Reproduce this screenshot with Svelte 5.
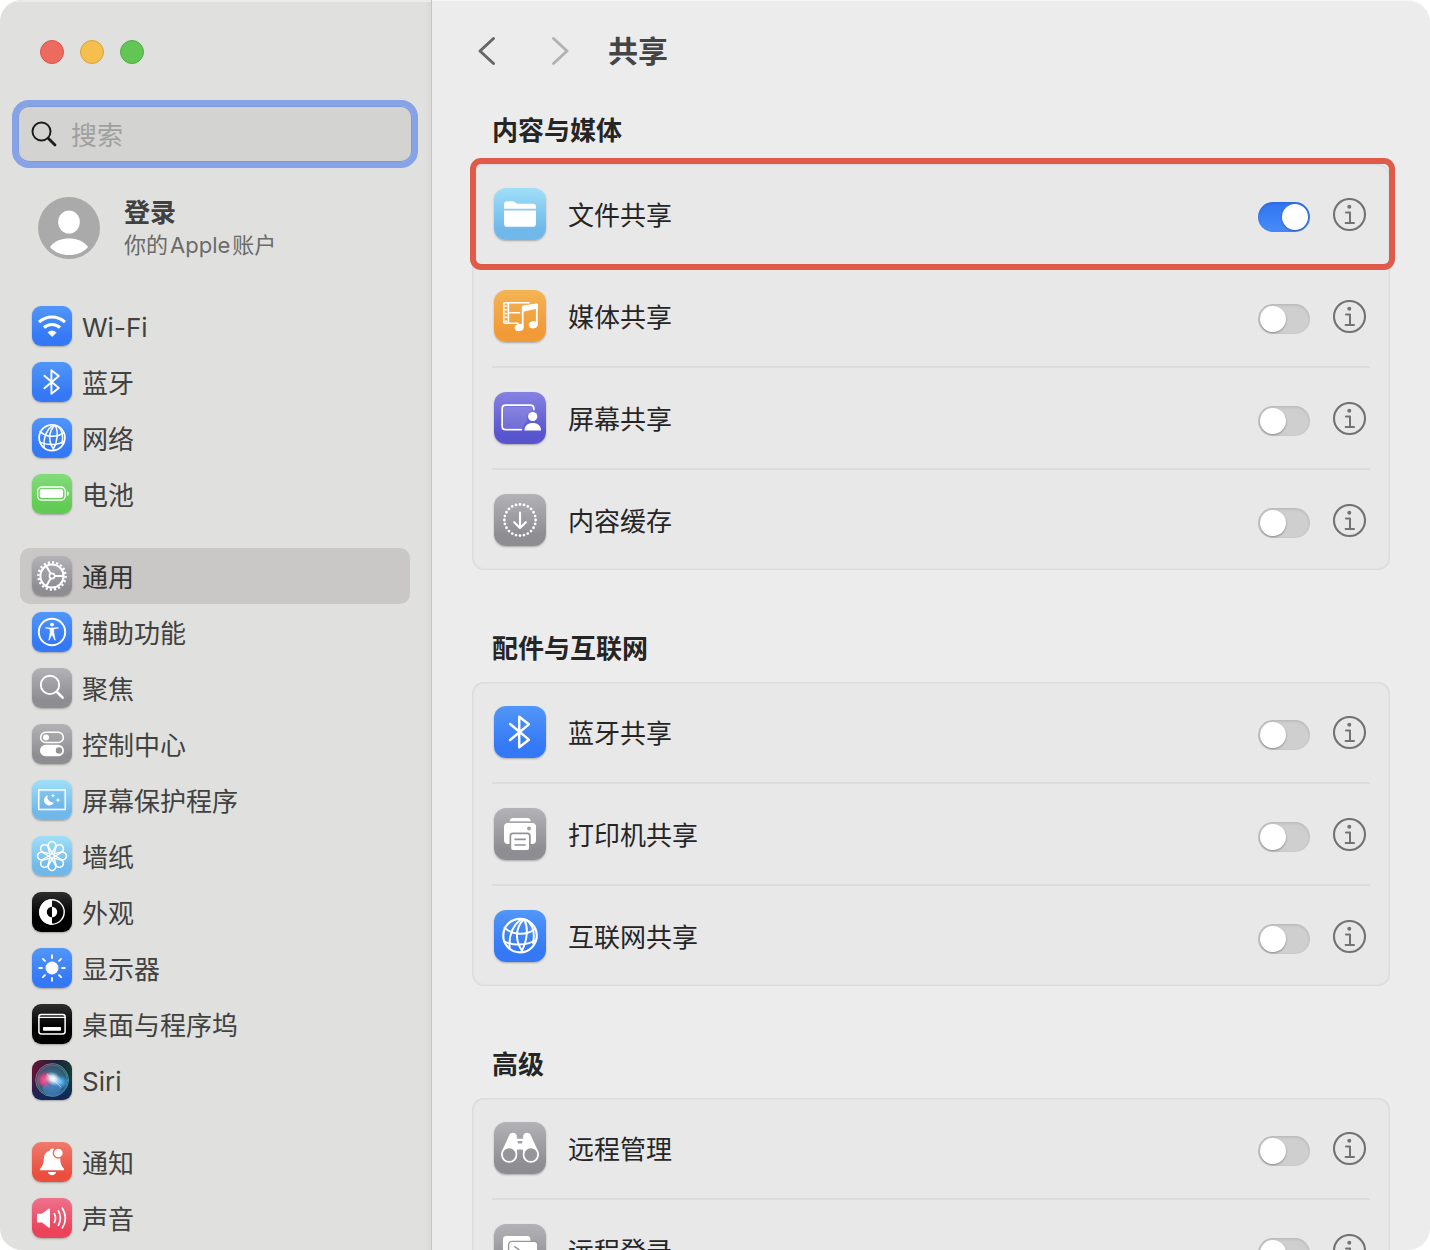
<script>
  let query = $state('');

  const account = { title: '登录', detail: ['你的', 'Apple', '账户'] };

  const groups = [
    [
      { id: 'wifi', label: 'Wi-Fi', tone: 'blue' },
      { id: 'bluetooth', label: '蓝牙', tone: 'blue' },
      { id: 'globe', label: '网络', tone: 'blue' },
      { id: 'battery', label: '电池', tone: 'green' }
    ],
    [
      { id: 'gear', label: '通用', tone: 'gray', current: true },
      { id: 'access', label: '辅助功能', tone: 'blue' },
      { id: 'spotlight', label: '聚焦', tone: 'gray' },
      { id: 'control', label: '控制中心', tone: 'gray' },
      { id: 'saver', label: '屏幕保护程序', tone: 'sky' },
      { id: 'wallpaper', label: '墙纸', tone: 'sky' },
      { id: 'appearance', label: '外观', tone: 'black' },
      { id: 'display', label: '显示器', tone: 'blue' },
      { id: 'dock', label: '桌面与程序坞', tone: 'black' },
      { id: 'siri', label: 'Siri', tone: 'siri' }
    ],
    [
      { id: 'bell', label: '通知', tone: 'red' },
      { id: 'sound', label: '声音', tone: 'pink' }
    ]
  ];

  let sections = $state([
    {
      title: '内容与媒体',
      rows: [
        { id: 'folder', label: '文件共享', tone: 'sky', on: true, marked: true },
        { id: 'media', label: '媒体共享', tone: 'orange', on: false },
        { id: 'screen', label: '屏幕共享', tone: 'purple', on: false },
        { id: 'cache', label: '内容缓存', tone: 'gray', on: false }
      ]
    },
    {
      title: '配件与互联网',
      rows: [
        { id: 'bluetooth', label: '蓝牙共享', tone: 'blue', on: false },
        { id: 'printer', label: '打印机共享', tone: 'gray', on: false },
        { id: 'globe', label: '互联网共享', tone: 'blue', on: false }
      ]
    },
    {
      title: '高级',
      rows: [
        { id: 'binoculars', label: '远程管理', tone: 'gray', on: false },
        { id: 'terminal', label: '远程登录', tone: 'gray', on: false }
      ]
    }
  ]);

  const wide = ['folder', 'media', 'screen', 'cache', 'printer', 'binoculars', 'terminal'];
  const eighths = [0, 45, 90, 135, 180, 225, 270, 315];
</script>

{#snippet glyph(id)}
  <svg viewBox={wide.includes(id) ? '0 0 52 52' : '0 0 40 40'} fill="none" stroke="#fff" stroke-linecap="round" stroke-linejoin="round" aria-hidden="true">
    {#if id === 'wifi'}
      <path d="M7 16.1A19 19 0 0 1 33 16.1M12 21.7A11.5 11.5 0 0 1 28 21.7" stroke-width="3" stroke-linecap="butt" />
      <path d="M20 30.4L16 26.4A6 6 0 0 1 24 26.4Z" fill="#fff" stroke-width=".6" />
    {:else if id === 'bluetooth'}
      <path d="M12.4 13.8L26.8 25.9L19.4 31.8V8.2L26.8 14.1L12.4 26.2" stroke-width="1.9" />
    {:else if id === 'globe'}
      <circle cx="20" cy="19.7" r="12.9" stroke-width="1.7" />
      <path d="M20.5 7.3C14.5 12 11.2 18 12 29M22.6 7.3C16 14.500 16.200 24 22 32M23.2 7.3C26.400 13 26 23 21 32.200M25.600 8C29 11 32 16 30 25.500" stroke-width="1.5" />
      <path d="M8.200 13.600C14 19.500 25 19.800 31.500 14.600M7.800 24.200C14.500 27.500 25 27.600 31.800 23.300" stroke-width="1.5" />
    {:else if id === 'battery'}
      <rect x="5.6" y="13" width="27.6" height="13.2" rx="4.2" stroke-width="1.3" />
      <rect x="7.8" y="15.1" width="23.2" height="9" rx="2.4" fill="#fff" stroke="none" />
      <path d="M35 17.2Q37 18 37 19.6T35 22Z" fill="#fff" stroke="none" />
    {:else if id === 'gear'}
      <circle cx="20" cy="20" r="11.6" stroke-width="2" />
      <circle cx="20" cy="20" r="13.6" stroke-width="2.4" stroke-linecap="butt" pathLength="40" stroke-dasharray="1 1" />
      <circle cx="20" cy="20" r="2.6" stroke-width="1.7" />
      <path d="M23 20H31.5M18.6 17.4L14 9.6M18.6 22.6L14 30.4" stroke-width="2" />
      <circle cx="20" cy="20" r=".8" fill="#87868b" stroke="none" />
    {:else if id === 'access'}
      <circle cx="20" cy="20" r="13.2" stroke-width="1.9" />
      <circle cx="20" cy="12.6" r="1.9" fill="#fff" stroke="none" />
      <path d="M14 15.9L18.4 16.5H21.6L26 15.9" stroke-width="1.4" />
      <path d="M18.5 16.5H21.5L21.8 21L23.1 28.2L20.2 22.6H19.8L16.9 28.2L18.2 21Z" fill="#fff" stroke-width=".8" />
    {:else if id === 'spotlight'}
      <circle cx="18" cy="16.9" r="9.2" stroke-width="1.9" />
      <path d="M25 24L30.6 29.7" stroke-width="2.6" />
    {:else if id === 'control'}
      <rect x="8.6" y="8.2" width="22.8" height="10.4" rx="5.2" stroke-width="1.5" />
      <circle cx="14" cy="13.4" r="3" fill="#fff" stroke="none" />
      <rect x="8" y="20.8" width="24" height="11.4" rx="5.7" fill="#fff" stroke="none" />
      <circle cx="27" cy="26.5" r="3.2" fill="#929196" stroke="none" />
    {:else if id === 'saver'}
      <rect x="6.7" y="9.9" width="26.6" height="19.6" stroke-width="1.5" stroke-linejoin="miter" />
      <rect x="8.4" y="11.6" width="23.2" height="16.2" fill="#5fa9dc" fill-opacity=".35" stroke="none" />
      <path d="M15.6 15.3A5.2 5.2 0 1 0 22 22.2A5.4 5.4 0 0 1 15.6 15.3Z" fill="#fff" stroke="none" />
      <path d="M21 13L21.6 15L23.5 15.6L21.6 16.2L21 18.2L20.4 16.2L18.5 15.6L20.4 15ZM26 17.4L26.7 19.4L28.7 20.1L26.7 20.8L26 22.8L25.3 20.8L23.3 20.1L25.3 19.4Z" fill="#fff" stroke="none" />
    {:else if id === 'wallpaper'}
      {#each eighths as a}
        <path d="M20.8 18.2L16.8 11.4A3.8 3.8 0 1 1 23.2 11.4L19.2 18.2" stroke-width="1.4" transform="rotate({a} 20 20)" />
      {/each}
      <circle cx="20" cy="20" r="1.3" fill="#84c4ee" stroke="none" />
    {:else if id === 'appearance'}
      <circle cx="20" cy="20" r="12.2" stroke-width="1.4" />
      <path d="M20 7.2A12.8 12.8 0 0 0 20 32.8V25.2A5.2 5.2 0 0 1 20 14.8Z" fill="#fff" stroke="none" />
      <path d="M20 14.8A5.2 5.2 0 0 1 20 25.2Z" fill="#fff" stroke="none" />
    {:else if id === 'display'}
      <circle cx="20" cy="20" r="6.5" fill="#fff" stroke="none" />
      {#each eighths as a}
        <path d="M20 10V7.2" stroke-width="1.9" transform="rotate({a} 20 20)" />
      {/each}
    {:else if id === 'dock'}
      <rect x="6.9" y="10.4" width="26.2" height="19.6" rx="2.4" stroke-width="1.5" />
      <path d="M7 13.4H33" stroke-width="1.2" />
      <rect x="11" y="23" width="18" height="3.8" rx=".8" fill="#fff" stroke="none" />
    {:else if id === 'siri'}
      <defs>
        <radialGradient id="siri-pink"><stop offset="0" stop-color="#ff5f9b" /><stop offset=".6" stop-color="#d8417f" stop-opacity=".8" /><stop offset="1" stop-color="#c03074" stop-opacity="0" /></radialGradient>
        <radialGradient id="siri-blue"><stop offset="0" stop-color="#6bd0ff" /><stop offset=".6" stop-color="#3a8fd8" stop-opacity=".8" /><stop offset="1" stop-color="#2a70c0" stop-opacity="0" /></radialGradient>
        <radialGradient id="siri-teal"><stop offset="0" stop-color="#4a9ca8" /><stop offset="1" stop-color="#3f6c8c" stop-opacity=".55" /></radialGradient>
        <radialGradient id="siri-glow"><stop offset="0" stop-color="#fff" /><stop offset=".4" stop-color="#e8f6ff" stop-opacity=".85" /><stop offset="1" stop-color="#bde4ff" stop-opacity="0" /></radialGradient>
        <linearGradient id="siri-ring" x1="0" y1="0" x2="1" y2="1"><stop offset="0" stop-color="#e0568a" /><stop offset=".45" stop-color="#4fb79b" /><stop offset="1" stop-color="#4aa6e8" /></linearGradient>
      </defs>
      <circle cx="20" cy="20" r="16" fill="url(#siri-teal)" stroke="none" />
      <ellipse cx="13.2" cy="20" rx="9" ry="9" fill="url(#siri-pink)" stroke="none" />
      <ellipse cx="28.5" cy="22" rx="8" ry="7.4" fill="url(#siri-blue)" stroke="none" />
      <ellipse cx="20" cy="28.6" rx="9.6" ry="6.4" fill="#4a8fdc" fill-opacity=".5" stroke="none" />
      <circle cx="20" cy="20" r="16.4" stroke="url(#siri-ring)" stroke-width="1" stroke-opacity=".75" />
      <ellipse cx="20.4" cy="20.4" rx="14.8" ry="15.2" stroke="url(#siri-ring)" stroke-width=".8" stroke-opacity=".6" />
      <ellipse cx="21" cy="18.8" rx="9" ry="6.6" fill="url(#siri-glow)" stroke="none" transform="rotate(28 21 19)" />
      <path d="M15 14L29 27" stroke-width="1" stroke-opacity=".5" />
    {:else if id === 'bell'}
      <path d="M8.4 28.2C7.6 28.2 7.7 27.2 8.3 26.5C11.8 23 11.4 20 12 15.6C12.6 10.4 16 9.4 17.6 8.8C18.2 7.3 19 6.6 20.4 6.6C21.6 6.6 22.6 7.4 23 8.8C25 9.4 27.6 11 28.1 15.6C28.6 20 28.4 23 31.7 26.5C32.3 27.2 32.4 28.2 31.6 28.2Z" fill="#fff" stroke="none" />
      <path d="M16 30H24C23.6 34.2 16.4 34.2 16 30Z" fill="#fff" stroke="none" />
      <circle cx="26.3" cy="11" r="5" fill="#fff" stroke="#ec6a5c" stroke-width="1.3" />
    {:else if id === 'sound'}
      <path d="M5.8 15.8H10L16.6 10.7Q18 9.8 18 11.4V28.8Q18 30.4 16.6 29.5L10 24.6H5.8Q5 24.6 5 23.8V16.6Q5 15.8 5.8 15.8Z" fill="#fff" stroke="none" />
      <path d="M22.4 15.8Q24.6 20 22.4 24.4M26.4 12.8Q30.4 20 26.4 27.3M30.4 10.2Q36.4 20 30.4 29.9" stroke-width="1.7" />
    {:else if id === 'folder'}
      <path d="M10 20.8V16.4Q10 13.2 13.2 13.2H18.4Q20 13.2 21 14.2L22 15.1Q22.8 15.8 24 15.8H38.6Q42 15.8 42 19V20.8Z" fill="#fff" stroke="none" />
      <path d="M10 22.600H42V35.4Q42 38.8 38.6 38.8H13.4Q10 38.8 10 35.4Z" fill="#fff" stroke="none" />
    {:else if id === 'media'}
      <path d="M35 12.8H11Q9.8 12.8 9.8 14V32Q9.8 33.2 11 33.2H24M14.4 13V33M14.4 22.8H25.5" stroke-width="1.6" />
      <path d="M12 15.2V32" stroke-width="2.6" stroke-linecap="butt" stroke-dasharray="1.5 2.3" />
      <path d="M28.7 37V17.6L42.8 14.6V34.4" stroke-width="1.8" />
      <path d="M28 16.8Q28 15.9 29 15.6L42.6 13.5Q43.6 13.4 43.6 14.4V18.6L28 22Z" fill="#fff" stroke="none" />
      <ellipse cx="25.2" cy="37.6" rx="4.5" ry="3.6" fill="#fff" stroke="none" transform="rotate(-14 25 37.6)" />
      <ellipse cx="39.2" cy="34.8" rx="4.5" ry="3.6" fill="#fff" stroke="none" transform="rotate(-14 39 34.8)" />
    {:else if id === 'screen'}
      <path d="M11 15H36.5Q38 15 38 16.5V19Q32.5 20.5 33 27Q33.5 30.5 31 31.5L28.5 36H11Q10 36 10 35V16Q10 15 11 15Z" fill="#fff" fill-opacity=".12" stroke="none" />
      <path d="M39.8 17.4V16.6Q39.8 13.2 36.4 13.2H11.6Q8.2 13.2 8.2 16.6V34.2Q8.2 37.6 11.6 37.6H27.4" stroke-width="1.8" />
      <circle cx="38.7" cy="24.5" r="4.6" fill="#fff" stroke="none" />
      <path d="M30.4 38.6C30.4 33.6 34 31 38.7 31S47 33.6 47 38.6Z" fill="#fff" stroke="none" />
    {:else if id === 'cache'}
      <circle cx="26" cy="26" r="15.6" stroke-width="2.8" pathLength="240" stroke-dasharray="0 10" />
      <path d="M26 18.6V33.6M20.2 28.2L26 34L31.8 28.2" stroke-width="2.1" />
    {:else if id === 'printer'}
      <path d="M15.6 13.2Q16.2 10 19 10H33.4Q36.2 10 36.8 13.2Z" fill="#fff" stroke="none" />
      <rect x="10" y="15" width="32" height="21" rx="4" fill="#fff" stroke="none" />
      <path d="M16 42.6V27.4Q16 25 18.2 25H34Q36.2 25 36.2 27.4V42.6" fill="#949398" stroke="#949398" stroke-width="1" />
      <path d="M17.2 28Q17.2 26.2 19 26.2H33.2Q35 26.2 35 28V40Q35 42 33 42H19.2Q17.2 42 17.2 40Z" fill="#fff" stroke="none" />
      <path d="M21 31.4H31.2M21 37H31.2" stroke="#929196" stroke-width="1.6" />
      <circle cx="35" cy="20.4" r="2" fill="#a3a2a7" stroke="none" />
    {:else if id === 'binoculars'}
      <path d="M7.5 30L15 13.8C16 10 21.5 9.8 22.8 13.4V16.8H29.2V13.4C30.5 9.8 36 10 37 13.8L44.5 30L44.6 33H29V28.6Q29 27.6 27.6 27.6H24.4Q23 27.6 23 28.6V33H7.4Z" fill="#fff" stroke="none" />
      <rect x="23.6" y="19" width="4.8" height="2.4" rx=".8" fill="#a09fa4" stroke="none" />
      <circle cx="15.2" cy="32.6" r="7.3" fill="#96959a" stroke-width="1.8" />
      <circle cx="36.8" cy="32.6" r="7.3" fill="#96959a" stroke-width="1.8" />
    {:else if id === 'terminal'}
      <rect x="9" y="12" width="27.4" height="22" rx="3.4" fill="#fff" stroke="none" />
      <rect x="14.6" y="17.4" width="29.2" height="23" rx="3.6" fill="#fff" stroke="#98979c" stroke-width="1.4" />
      <path d="M20.6 22.6L25 25.6L20.6 28.6M27 30H32" stroke="#98979c" stroke-width="1.3" />
    {/if}
  </svg>
{/snippet}

<div class="window">
  <aside class="sidebar">
    <div class="lights">
      <button class="light close" aria-label="关闭"></button>
      <button class="light minimize" aria-label="最小化"></button>
      <button class="light zoom" aria-label="缩放"></button>
    </div>

    <label class="search">
      <svg viewBox="0 0 26 26" fill="none" stroke="#1c1c1c" stroke-linecap="round" aria-hidden="true">
        <circle cx="10.5" cy="10.5" r="9" stroke-width="2" />
        <path d="M17.2 17.2L24 24" stroke-width="2.8" />
      </svg>
      <input type="text" placeholder="搜索" aria-label="搜索" bind:value={query} />
    </label>

    <a class="account" href="#account">
      <svg class="avatar" viewBox="0 0 62 62" aria-hidden="true">
        <circle cx="31" cy="31" r="31" fill="#aaa" />
        <ellipse cx="31" cy="25" rx="10.8" ry="11.6" fill="#fff" />
        <path d="M12 50C16 44 23 41.4 31 41.4S46 44 50 50C45.500 55.500 38.500 58 31 58S16.500 55.500 12 50Z" fill="#fff" />
      </svg>
      <span class="who">
        <strong>{account.title}</strong>
        <small>{#each account.detail as part}<span>{part}</span>{/each}</small>
      </span>
    </a>

    <nav>
      {#each groups as group}
        <ul>
          {#each group as item}
            <li>
              <a class="item" class:current={item.current} href="#{item.id}" aria-current={item.current ? 'page' : undefined}>
                <span class="tile {item.tone}">{@render glyph(item.id)}</span>
                <span class="name">{item.label}</span>
              </a>
            </li>
          {/each}
        </ul>
      {/each}
    </nav>
  </aside>

  <main>
    <header>
      <button class="step" aria-label="后退">
        <svg viewBox="0 0 20 30" fill="none" stroke="#666" stroke-width="3" stroke-linecap="round" stroke-linejoin="round"><path d="M16.500 2.500L3 15L16.500 27.500" /></svg>
      </button>
      <button class="step" aria-label="前进">
        <svg viewBox="0 0 20 30" fill="none" stroke="#b2b2b2" stroke-width="3" stroke-linecap="round" stroke-linejoin="round"><path d="M3.500 2.500L17 15L3.500 27.500" /></svg>
      </button>
      <h1>共享</h1>
    </header>

    {#each sections as section}
      <section>
        <h2>{section.title}</h2>
        <ul class="card">
          {#each section.rows as row}
            <li class:marked={row.marked}>
              <div class="row">
                <span class="tile large {row.tone}">{@render glyph(row.id)}</span>
                <span class="name">{row.label}</span>
                <input class="switch" type="checkbox" role="switch" aria-label={row.label} bind:checked={row.on} />
                <button class="info" aria-label="{row.label}详细信息">
                  <svg viewBox="0 0 34 34" fill="none" stroke="#727272" aria-hidden="true">
                    <circle cx="17.5" cy="16.5" r="15.5" stroke-width="2.1" />
                    <circle cx="17.3" cy="8.8" r="2" fill="#727272" stroke="none" />
                    <path d="M14 14.4H18V24.9M13.6 24.9H22" stroke-width="2" stroke-linecap="round" stroke-linejoin="round" />
                  </svg>
                </button>
              </div>
            </li>
          {/each}
        </ul>
      </section>
    {/each}
  </main>
</div>

<style>
  :global(body) {
    margin: 0;
    background: #fff;
  }

  .window {
    display: flex;
    height: 100vh;
    overflow: hidden;
    border-radius: 22px;
    background: #ececec;
    box-shadow: inset 0 1px 0 #f8f8f8;
    color: #252525;
    font-family: Inter, 'Noto Sans CJK SC', sans-serif;
    font-size: 26px;
    line-height: 34px;
  }

  button {
    padding: 0;
    border: 0;
    background: none;
  }

  ul {
    margin: 0;
    padding: 0;
    list-style: none;
  }

  svg {
    display: block;
  }

  .sidebar {
    box-sizing: border-box;
    flex: 0 0 432px;
    overflow: hidden;
    border-right: 1px solid #c6c6c4;
    background: linear-gradient(to left, #d9d9d7, #e0e0de 6px);
    box-shadow: inset 0 2px 0 #ebebea;
    color: #41413f;
  }

  .lights {
    display: flex;
    gap: 16px;
    padding: 40px 40px 0;
  }

  .light {
    box-sizing: border-box;
    width: 24px;
    height: 24px;
    border-radius: 50%;
  }

  .close {
    border: 1px solid #d9544a;
    background: #ed6a5f;
  }

  .minimize {
    border: 1px solid #dba23c;
    background: #f5bf4f;
  }

  .zoom {
    border: 1px solid #4fae40;
    background: #62c655;
  }

  .search {
    display: flex;
    align-items: center;
    gap: 14px;
    height: 56px;
    margin: 36px 13px 0 12px;
    padding: 0 13px;
    border: 6px solid #86a3e8;
    border-radius: 17px;
    background: #d3d3d1;
    background-clip: padding-box;
    box-shadow: inset 0 0 0 1px #7d98dc;
  }

  .search svg {
    flex: none;
    width: 26px;
    height: 26px;
  }

  .search input {
    flex: 1;
    min-width: 0;
    padding: 3px 0 0;
    border: 0;
    outline: 0;
    background: none;
    color: #252525;
    font: inherit;
  }

  .search input::placeholder {
    color: #a0a09e;
    opacity: 1;
  }

  .account {
    display: flex;
    align-items: center;
    gap: 24px;
    margin: 28px 20px 0 38px;
    color: inherit;
    text-decoration: none;
  }

  .avatar {
    flex: none;
    width: 62px;
    height: 62px;
  }

  .who {
    display: flex;
    flex-direction: column;
  }

  .who strong {
    font-weight: 700;
  }

  .who small {
    display: flex;
    gap: 2px;
    color: #6b6b69;
    font-size: 22px;
    line-height: 30px;
  }

  nav {
    display: flex;
    flex-direction: column;
    gap: 26px;
    padding: 38px 21px 20px 20px;
  }

  .item {
    display: flex;
    align-items: center;
    gap: 10px;
    height: 56px;
    padding: 0 12px;
    border-radius: 10px;
    color: inherit;
    text-decoration: none;
  }

  .current {
    background: #c9c8c6;
    color: #333;
  }

  .tile {
    flex: none;
    width: 40px;
    height: 40px;
    border-radius: 9px;
    box-shadow: 0 1px 2px rgb(0 0 0 / 28%);
  }

  .tile svg {
    width: 100%;
    height: 100%;
  }

  .large {
    width: 52px;
    height: 52px;
    border-radius: 12px;
  }

  .blue { background: linear-gradient(#5196f8, #3478f6 80%); }
  .green { background: linear-gradient(#83dc7b, #62cb55 80%); }
  .gray { background: linear-gradient(#b3b2b7, #8e8d92 80%); }
  .sky { background: linear-gradient(#a0dff8, #70b8ea 80%); }
  .black { background: linear-gradient(#2e2e2e, #000 60%); }
  .red { background: linear-gradient(#ef7b6d, #eb4e3d 80%); }
  .pink { background: linear-gradient(#ee718c, #eb445a 80%); }
  .orange { background: linear-gradient(#f4b454, #f19a37 80%); }
  .purple { background: linear-gradient(#8682e2, #5955ce 80%); }
  .siri { background: linear-gradient(to bottom, transparent 40%, #14265c), linear-gradient(100deg, #6a1238, #1e2038 50%, #104438); }

  main {
    flex: 1;
    min-width: 0;
    overflow-y: auto;
    padding: 0 40px;
    scrollbar-width: none;
  }

  header {
    display: flex;
    align-items: center;
    height: 102px;
    margin-bottom: 10px;
    padding-left: 5px;
  }

  .step {
    width: 20px;
    margin-right: 53px;
  }

  .step + h1 {
    margin-left: -15px;
  }

  .step svg {
    width: 20px;
    height: 30px;
  }

  h1 {
    margin: 0;
    color: #444;
    font-size: 30px;
    font-weight: 700;
    line-height: 40px;
  }

  h2 {
    margin: 0 0 16px;
    padding: 2px 0 0 20px;
    font-size: 26px;
    font-weight: 700;
    line-height: 34px;
  }

  section {
    margin-bottom: 60px;
  }

  .card {
    border-radius: 12px;
    background: #e8e8e8;
    box-shadow: inset 0 0 0 1px #dcdcdc, inset 0 0 0 2px #e2e2e2;
  }

  .card li {
    padding: 0 20px;
  }

  .row {
    display: flex;
    align-items: center;
    gap: 22px;
    padding: 24px 4px 24px 2px;
  }

  .card li:not(:last-child) .row {
    border-bottom: 2px solid #dcdcdc;
  }

  .name {
    flex: 1;
    padding-top: 3px;
  }

  .marked {
    position: relative;
  }

  .marked::after {
    position: absolute;
    inset: -6px -5px -4px -2px;
    border: 6px solid #e05a4a;
    border-radius: 11px;
    content: '';
    pointer-events: none;
  }

  .switch {
    flex: none;
    width: 52px;
    height: 30px;
    margin: 5px 0 0;
    padding: 2px;
    box-sizing: border-box;
    border-radius: 15px;
    background: #cfcfcf;
    box-shadow: inset 0 1px 3px rgb(0 0 0 / 14%);
    appearance: none;
  }

  .switch::before {
    display: block;
    width: 26px;
    height: 26px;
    border-radius: 50%;
    background: #fff;
    box-shadow: 0 1px 2px rgb(0 0 0 / 35%);
    content: '';
  }

  .switch:checked {
    background: linear-gradient(#3074f2, #478cf8);
  }

  .switch:checked::before {
    margin-left: 22px;
  }

  .info {
    flex: none;
    width: 34px;
    height: 34px;
    margin-top: 2px;
  }

  .info svg {
    width: 34px;
    height: 34px;
  }
</style>
